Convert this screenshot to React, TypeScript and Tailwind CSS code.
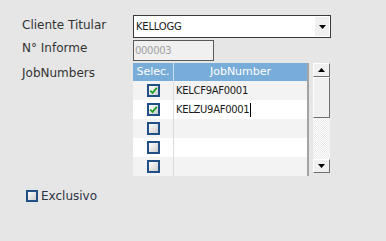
import React from 'react';

const font = { fontFamily: '"DejaVu Sans", sans-serif' };

const CheckBox: React.FC<{ checked?: boolean; size?: string }> = ({ checked, size = 'w-[13px] h-[13px]' }) => (
  <div className={`${size} border-2 border-[#1f4f85] bg-gradient-to-br from-white to-[#cdcdcd] flex items-center justify-center`}>
    {checked && (
      <svg width="9" height="9" viewBox="0 0 9 9">
        <path d="M1.2 4.6 L3.5 6.9 L7.8 1.8" fill="none" stroke="#22a12a" strokeWidth="1.8" />
      </svg>
    )}
  </div>
);

const ScrollButton: React.FC<{ up?: boolean }> = ({ up }) => (
  <div className="h-[14px] bg-[#f0f0f0] border border-t-white border-l-white border-r-[#6e6e6e] border-b-[#6e6e6e] flex items-center justify-center">
    <svg width="7" height="4" viewBox="0 0 7 4">
      <path d={up ? 'M0 4 L3.5 0 L7 4 Z' : 'M0 0 L7 0 L3.5 4 Z'} fill="#000" />
    </svg>
  </div>
);

const rows = [
  { checked: true, job: 'KELCF9AF0001' },
  { checked: true, job: 'KELZU9AF0001', editing: true },
  { checked: false, job: '' },
  { checked: false, job: '' },
  { checked: false, job: '' },
];

const App: React.FC = () => {
  return (
    <div className="w-[386px] h-[241px] bg-[#e6e6e6] pt-[15px] pl-[22px] text-[#333]" style={font}>
      {/* Cliente Titular */}
      <div className="flex">
        <div className="w-[111px] pt-[3px] text-[12px] leading-[14px]">Cliente Titular</div>
        <div className="w-[198px] h-[23px] border border-[#3a3a3a] bg-white flex items-center">
          <span className="flex-1 pl-[2px] text-[10px] tracking-[-0.2px] text-[#1a1a1a]">KELLOGG</span>
          <div className="w-[14px] h-[19px] mr-px bg-[#f0f0f0] flex items-center justify-center">
            <svg width="7" height="4" viewBox="0 0 7 4">
              <path d="M0 0 L7 0 L3.5 4 Z" fill="#000" />
            </svg>
          </div>
        </div>
      </div>

      {/* N° Informe */}
      <div className="flex mt-[2px]">
        <div className="w-[111px] pt-[1px] text-[12px] leading-[14px]">N° Informe</div>
        <div className="w-[81px] h-[21px] border border-[#5a5a5a] bg-[#f0f0f0] flex items-center pl-[1px] text-[10px] tracking-[-0.3px] text-[#a0a0a0]">
          000003
        </div>
      </div>

      {/* JobNumbers */}
      <div className="flex mt-[2px]">
        <div className="w-[111px] pt-[3px] text-[12px] leading-[14px]">JobNumbers</div>
        <div className="flex h-[113px]">
          <div className="w-[176px] border-r-2 border-[#a3a3a3]">
            <div className="flex h-[18px] bg-[#78acd9] text-white text-[11px] leading-[18px]">
              <div className="w-[41px] text-center border-r border-[#c8def2]">Selec.</div>
              <div className="flex-1 text-center">JobNumber</div>
            </div>
            {rows.map((r, i) => (
              <div key={i} className={`flex h-[19px] ${i % 2 === 0 ? 'bg-[#f3f3f3]' : 'bg-white'}`}>
                <div className="w-[41px] border-r border-[#dcdcdc] flex items-center justify-center">
                  <CheckBox checked={r.checked} />
                </div>
                <div className="flex-1 flex items-center pl-[2px] text-[10px] tracking-[-0.3px] text-[#1a1a1a]">
                  {r.job}
                  {r.editing && <span className="ml-[1px] w-px h-[14px] bg-black" />}
                </div>
              </div>
            ))}
          </div>
          <div className="ml-[4px] w-[17px] h-[110px] flex flex-col">
            <ScrollButton up />
            <div className="h-[41px] bg-[#f0f0f0] border border-t-white border-l-white border-r-[#6e6e6e] border-b-[#6e6e6e]" />
            <div className="flex-1 bg-[image:repeating-conic-gradient(#ffffff_0%_25%,#e9e9e9_0%_50%)] bg-[length:2px_2px]" />
            <ScrollButton />
          </div>
        </div>
      </div>

      {/* Exclusivo */}
      <div className="flex items-center mt-[13px] ml-[4px] gap-[3px]">
        <CheckBox size="w-[12px] h-[12px]" />
        <span className="text-[12px] leading-[14px] text-[#2e3444]">Exclusivo</span>
      </div>
    </div>
  );
};

export default App;
